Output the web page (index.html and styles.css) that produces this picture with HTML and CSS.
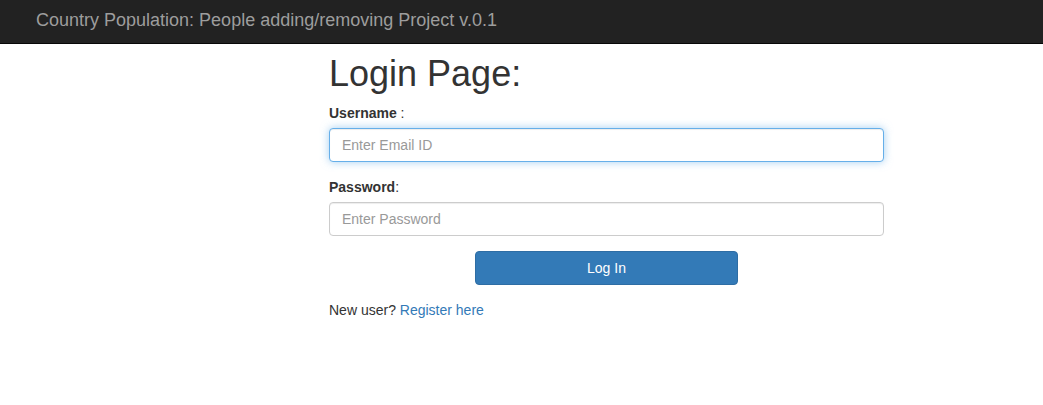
FILE: index.html
```html
<!DOCTYPE html>
<html>
<head>
    <title>Login Page</title>
    <link rel="stylesheet" href="styles.css">
</head>
<body>
    <nav class="navbar">
        <span class="brand">Country Population: People adding/removing Project v.0.1</span>
    </nav>

    <div class="login">
        <h1>Login Page:</h1>
        <form>
            <div class="form-group">
                <label for="username"><b>Username</b> :</label>
                <input type="text" id="username" class="focused" placeholder="Enter Email ID">
            </div>
            <div class="form-group">
                <label for="password"><b>Password</b>:</label>
                <input type="password" id="password" placeholder="Enter Password">
            </div>
            <div class="actions">
                <button type="button">Log In</button>
            </div>
        </form>
        <p class="register">New user? <a href="#">Register here</a></p>
    </div>
</body>
</html>
```
FILE: styles.css
```css
body {
    margin: 0;
    font-family: "Liberation Sans", Arial, sans-serif;
    font-size: 14px;
    line-height: 20px;
    color: #333;
    background: #fff;
}
.navbar {
    height: 44px;
    box-sizing: border-box;
    padding: 10px 36px 0;
    background: #222;
    border-bottom: 1px solid #080808;
}
.brand {
    font-size: 18px;
    line-height: 20px;
    color: #9d9d9d;
}
.login {
    width: 555px;
    margin-left: 329px;
}
h1 {
    font-size: 36px;
    font-weight: 500;
    line-height: 1.1;
    margin: 9.7px 0 10px;
}
.form-group {
    margin-bottom: 15px;
}
label {
    display: block;
    margin-bottom: 5px;
    font-weight: normal;
}
label b {
    font-weight: bold;
}
input {
    display: block;
    width: 100%;
    height: 34px;
    box-sizing: border-box;
    padding: 6px 12px;
    font-family: inherit;
    font-size: 14px;
    color: #555;
    border: 1px solid #ccc;
    border-radius: 4px;
    box-shadow: inset 0 1px 1px rgba(0,0,0,0.075);
    outline: none;
}
input::placeholder {
    color: #999;
}
input.focused {
    border-color: #66afe9;
    box-shadow: inset 0 1px 1px rgba(0,0,0,0.075), 0 0 8px rgba(102,175,233,0.6);
}
.actions {
    display: flex;
    justify-content: center;
}
button {
    width: 262.5px;
    height: 34px;
    padding: 6px 12px;
    font-family: inherit;
    font-size: 14px;
    color: #fff;
    background: #337ab7;
    border: 1px solid #2e6da4;
    border-radius: 4px;
    cursor: pointer;
}
button:hover {
    background: #286090;
}
.register {
    margin: 15px 0 0;
}
.register a {
    color: #337ab7;
    text-decoration: none;
}
```
